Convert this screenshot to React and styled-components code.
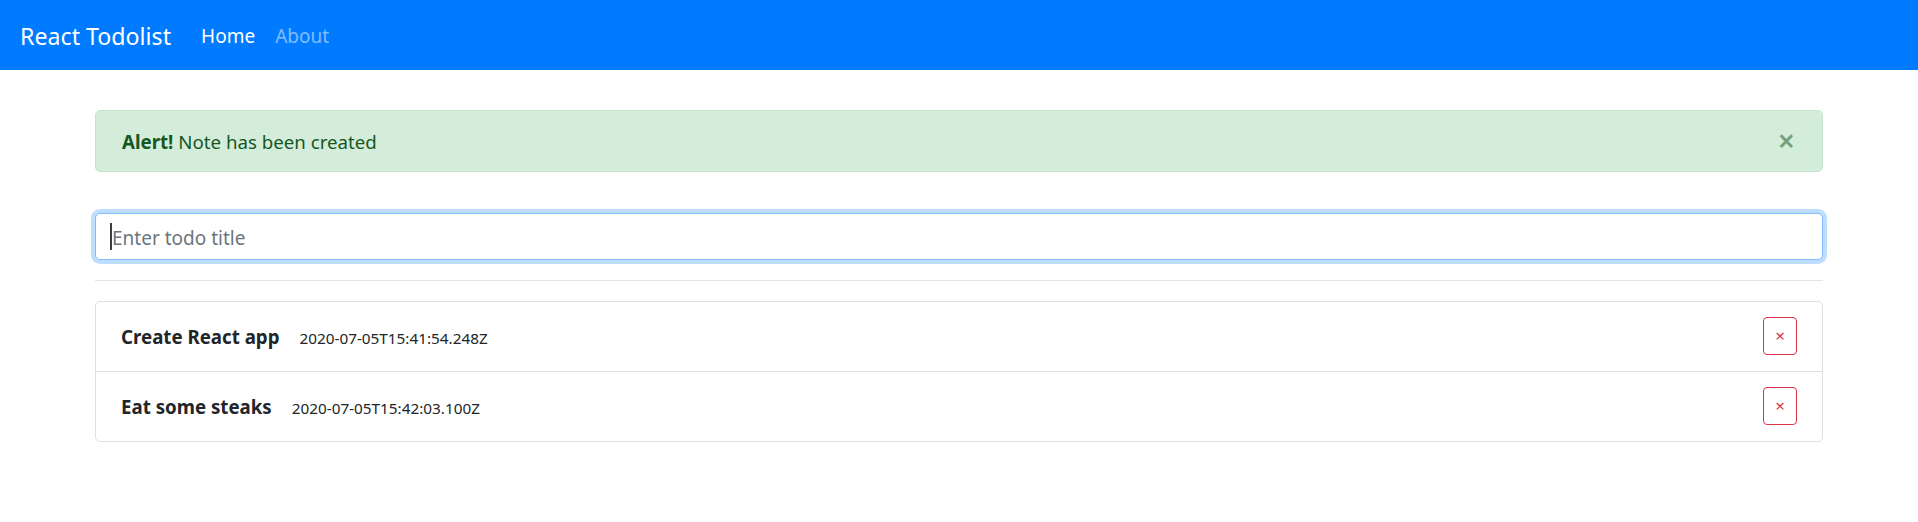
import React from 'react';
import styled, { createGlobalStyle } from 'styled-components';

const GlobalStyle = createGlobalStyle`
	*, *::before, *::after {
		box-sizing: border-box;
	}

	body {
		margin: 0;
		background: #fff;
		color: #212529;
		font-family: "Segoe UI", "Noto Sans", "Open Sans", sans-serif;
		font-size: 18.7px;
		line-height: 30px;
	}
`;

const Navbar = styled.nav`
	display: flex;
	align-items: center;
	height: 70px;
	padding: 2px 20px 0;
	background: #007bff;
`;

const Brand = styled.a`
	margin-right: 20px;
	color: #fff;
	font-size: 23.2px;
	line-height: 38px;
	text-decoration: none;
`;

const NavLinks = styled.div`
	display: flex;
`;

const NavLink = styled.a`
	padding: 10px;
	color: ${(p) => (p.active ? '#fff' : 'rgba(255, 255, 255, 0.5)')};
	font-size: 19px;
	text-decoration: none;
`;

const Container = styled.main`
	max-width: 1728px;
	margin: 40px auto 0;
`;

const Alert = styled.div`
	position: relative;
	margin-bottom: 41px;
	padding: 16px 100px 14px 26px;
	border: 1px solid #c3e6cb;
	border-radius: 5px;
	background: #d4edda;
	color: #155724;

	strong {
		font-weight: 700;
	}
`;

const CloseButton = styled.button`
	position: absolute;
	top: 0;
	right: 0;
	padding: 15px 27px;
	border: 0;
	background: transparent;
	color: inherit;
	font-family: inherit;
	font-size: 30px;
	font-weight: 600;
	line-height: 1;
	opacity: 0.5;
	cursor: pointer;
`;

const Field = styled.div`
	position: relative;
`;

const Input = styled.input`
	display: block;
	width: 100%;
	height: 47px;
	padding: 8px 15px 6px 16px;
	border: 1px solid #80bdff;
	border-radius: 5px;
	box-shadow: 0 0 0 4px rgba(0, 123, 255, 0.25);
	outline: 0;
	caret-color: transparent;
	color: #495057;
	font-family: inherit;
	font-size: 19px;

	&::placeholder {
		color: #6c757d;
	}
`;

const Caret = styled.span`
	position: absolute;
	top: 10px;
	left: 15px;
	width: 2px;
	height: 27px;
	background: #3a3f44;
	pointer-events: none;
`;

const Divider = styled.hr`
	margin: 20px 0;
	border: 0;
	border-top: 1px solid rgba(0, 0, 0, 0.1);
`;

const List = styled.ul`
	margin: 0;
	padding: 0;
	list-style: none;
	border: 1px solid rgba(0, 0, 0, 0.125);
	border-radius: 5px;
`;

const Item = styled.li`
	display: flex;
	align-items: center;
	justify-content: space-between;
	padding: 15px 25px 16px;

	& + & {
		border-top: 1px solid rgba(0, 0, 0, 0.125);
	}
`;

const ItemText = styled.div`
	display: flex;
	align-items: baseline;
	padding-top: 3px;
`;

const Title = styled.strong`
	margin-right: 20px;
	font-weight: 700;
`;

const Stamp = styled.small`
	font-size: 15.3px;
`;

const DeleteButton = styled.button`
	padding: 5px 11px;
	border: 1px solid #dc3545;
	border-radius: 4px;
	background: transparent;
	color: #dc3545;
	font-family: inherit;
	font-size: 17px;
	line-height: 26px;
	cursor: pointer;
`;

const todos = [
	{ title: 'Create React app', date: '2020-07-05T15:41:54.248Z' },
	{ title: 'Eat some steaks', date: '2020-07-05T15:42:03.100Z' },
];

const App = () => (
	<>
		<GlobalStyle />
		<Navbar>
			<Brand href='#'>React Todolist</Brand>
			<NavLinks>
				<NavLink active href='#'>Home</NavLink>
				<NavLink href='#'>About</NavLink>
			</NavLinks>
		</Navbar>

		<Container>
			<Alert>
				<strong>Alert!</strong> Note has been created
				<CloseButton aria-label='Close'>×</CloseButton>
			</Alert>

			<Field>
				<Input placeholder='Enter todo title' />
				<Caret />
			</Field>

			<Divider />

			<List>
				{todos.map((todo) => (
					<Item key={todo.date}>
						<ItemText>
							<Title>{todo.title}</Title>
							<Stamp>{todo.date}</Stamp>
						</ItemText>
						<DeleteButton>×</DeleteButton>
					</Item>
				))}
			</List>
		</Container>
	</>
);

export default App;
